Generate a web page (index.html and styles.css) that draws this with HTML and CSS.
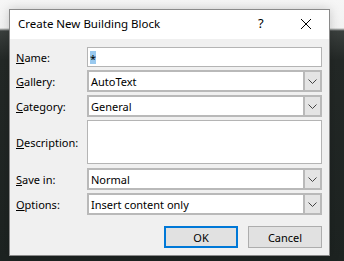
FILE: index.html
```html
<!DOCTYPE html>
<html>
<head>
<meta charset="utf-8">
<link rel="stylesheet" href="styles.css">
</head>
<body>
<div class="dialog">
  <div class="titlebar">
    <span class="title">Create New Building Block</span>
    <span class="help">?</span>
    <svg class="close" width="12" height="12" viewBox="0 0 12 12"><path d="M1 1 L11 11 M11 1 L1 11" stroke="#000" stroke-width="1" fill="none"/></svg>
  </div>
  <div class="content">
    <div class="row r-name">
      <label class="lbl"><u>N</u>ame:</label>
      <div class="field input"><span class="sel">*</span></div>
    </div>
    <div class="row">
      <label class="lbl"><u>G</u>allery:</label>
      <div class="field combo"><span class="val">AutoText</span><span class="btn"><svg width="9" height="5" viewBox="0 0 9 5"><path d="M0.5 0.5 L4.5 4.5 L8.5 0.5" stroke="#444" fill="none"/></svg></span></div>
    </div>
    <div class="row">
      <label class="lbl"><u>C</u>ategory:</label>
      <div class="field combo"><span class="val">General</span><span class="btn"><svg width="9" height="5" viewBox="0 0 9 5"><path d="M0.5 0.5 L4.5 4.5 L8.5 0.5" stroke="#444" fill="none"/></svg></span></div>
    </div>
    <div class="row r-desc">
      <label class="lbl"><u>D</u>escription:</label>
      <div class="field input desc"></div>
    </div>
    <div class="row">
      <label class="lbl"><u>S</u>ave in:</label>
      <div class="field combo"><span class="val">Normal</span><span class="btn"><svg width="9" height="5" viewBox="0 0 9 5"><path d="M0.5 0.5 L4.5 4.5 L8.5 0.5" stroke="#444" fill="none"/></svg></span></div>
    </div>
    <div class="row">
      <label class="lbl"><u>O</u>ptions:</label>
      <div class="field combo"><span class="val">Insert content only</span><span class="btn"><svg width="9" height="5" viewBox="0 0 9 5"><path d="M0.5 0.5 L4.5 4.5 L8.5 0.5" stroke="#444" fill="none"/></svg></span></div>
    </div>
    <div class="buttons">
      <div class="pbtn ok">OK</div>
      <div class="pbtn">Cancel</div>
    </div>
  </div>
</div>
</body>
</html>
```
FILE: styles.css
```css
html, body {
  margin: 0;
  height: 100%;
}
body {
  background:
    linear-gradient(to bottom, #f6f6f6 0, #f2f2f2 28px, #3a3f3d 31px, #232826 60px, #1d2321 100%);
  padding: 9px 0 0 9px;
  box-sizing: border-box;
  font-family: "Noto Sans", sans-serif;
  font-size: 11px;
  color: #000;
  overflow: hidden;
}
.dialog {
  width: 321px;
  height: 247px;
  box-sizing: border-box;
  border: 1px solid #8a8a8a;
  background: #f0f0f0;
  box-shadow: 0 0 10px rgba(0,0,0,0.18);
  display: flex;
  flex-direction: column;
}
.titlebar {
  height: 29px;
  background: #fff;
  display: flex;
  align-items: center;
  padding-left: 8px;
}
.title {
  flex: 1;
  font-size: 11.5px;
  position: relative;
  top: -1px;
}
.help {
  width: 14px;
  font-size: 13px;
  margin-right: 28px;
  position: relative;
  top: -2px;
}
.close {
  margin-right: 17px;
  position: relative;
  top: -1px;
}
.content {
  flex: 1;
  padding: 8px 7px 0 6px;
}
.row {
  display: flex;
  align-items: center;
  margin-bottom: 3px;
}
.r-desc { margin-bottom: 4px; }
.lbl {
  width: 71px;
  flex: none;
}
.field {
  width: 235px;
  box-sizing: border-box;
  background: #fff;
  display: flex;
  align-items: center;
}
.input {
  height: 20px;
  border: 1px solid #b4b4b4;
  padding-left: 2px;
}
.sel {
  background: #99c9ef;
  width: 6px;
  height: 13px;
  line-height: 15px;
  text-align: center;
  font-size: 11px;
}
.desc {
  height: 44px;
}
.combo {
  height: 22px;
  border: 2px solid #b9b9b9;
}
.val {
  flex: 1;
  padding-left: 2px;
}
.btn {
  width: 15px;
  height: 100%;
  background: #e4e4e4;
  border-left: 2px solid #b9b9b9;
  display: flex;
  align-items: center;
  justify-content: center;
}
.buttons {
  display: flex;
  justify-content: flex-end;
  gap: 10px;
  margin-top: 11px;
}
.pbtn {
  width: 74px;
  height: 22px;
  box-sizing: border-box;
  border: 1px solid #adadad;
  background: #e1e1e1;
  display: flex;
  align-items: center;
  justify-content: center;
}
.ok {
  border: 2px solid #0078d7;
}
```
